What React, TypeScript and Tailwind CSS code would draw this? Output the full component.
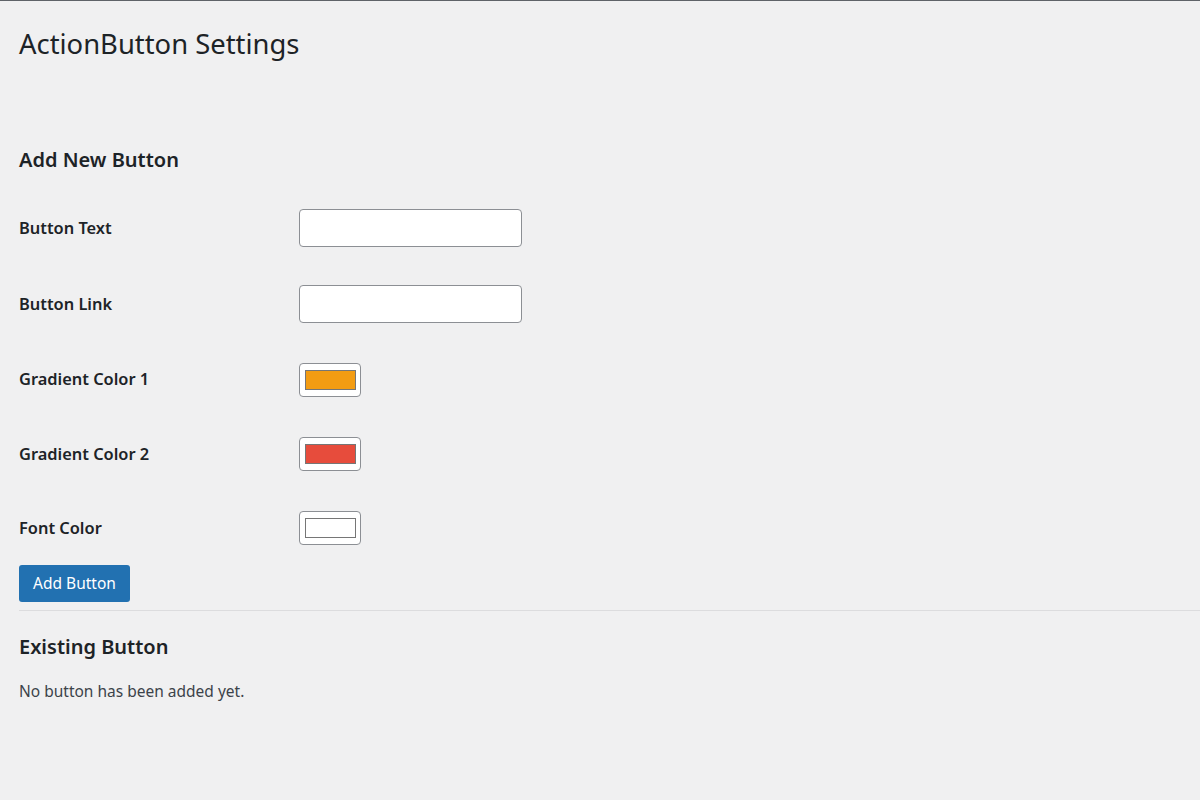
import React, { useState } from 'react';

type Field =
  | { kind: 'text'; label: string; key: string }
  | { kind: 'color'; label: string; key: string };

const FIELDS: Field[] = [
  { kind: 'text', label: 'Button Text', key: 'text' },
  { kind: 'text', label: 'Button Link', key: 'link' },
  { kind: 'color', label: 'Gradient Color 1', key: 'color1' },
  { kind: 'color', label: 'Gradient Color 2', key: 'color2' },
  { kind: 'color', label: 'Font Color', key: 'font' },
];

// row heights of the settings table
const ROW_HEIGHTS = ['h-[76px]', 'h-[76px]', 'h-[75px]', 'h-[74px]', 'h-[74px]'];

function ColorSwatch({ value }: { value: string }) {
  return (
    <div className="flex h-[34px] w-[62px] items-center justify-center rounded-[4px] border border-[#8c8f94] bg-white">
      <div className="h-[20px] w-[51px] border border-[#767676]" style={{ backgroundColor: value }} />
    </div>
  );
}

export default function App() {
  const [values, setValues] = useState<Record<string, string>>({
    text: '',
    link: '',
    color1: '#f39c12',
    color2: '#e74c3c',
    font: '#ffffff',
  });

  return (
    <div className="min-h-[800px] border-t border-[#5f6368] bg-[#f0f0f1] pl-[19px] text-[#1d2327] [font-family:'Noto_Sans','Open_Sans',sans-serif]">
      <h1 className="pt-[25px] text-[27.4px] leading-[36px] font-normal">ActionButton Settings</h1>

      <h2 className="mt-[84px] text-[20px] leading-[28px] font-semibold">Add New Button</h2>

      <div className="mt-[16px]">
        {FIELDS.map((f, i) => (
          <div key={f.key} className={`flex items-center ${ROW_HEIGHTS[i]}`}>
            <label className="w-[280px] text-[16.4px] font-semibold">{f.label}</label>
            {f.kind === 'text' ? (
              <input
                type="text"
                value={values[f.key]}
                onChange={(e) => setValues({ ...values, [f.key]: e.target.value })}
                className="h-[38px] w-[223px] rounded-[4px] border border-[#8c8f94] bg-white px-2 text-[16px] outline-none"
              />
            ) : (
              <ColorSwatch value={values[f.key]} />
            )}
          </div>
        ))}
      </div>

      <button className="h-[37px] w-[111px] rounded-[3px] bg-[#2271b1] text-[15.5px] text-white">Add Button</button>

      <hr className="mt-[8px] border-t border-[#dcdcde]" />

      <h2 className="mt-[22px] text-[20px] leading-[28px] font-semibold">Existing Button</h2>
      <p className="mt-[19px] text-[15.5px] leading-[22px] text-[#3c434a]">No button has been added yet.</p>
    </div>
  );
}
